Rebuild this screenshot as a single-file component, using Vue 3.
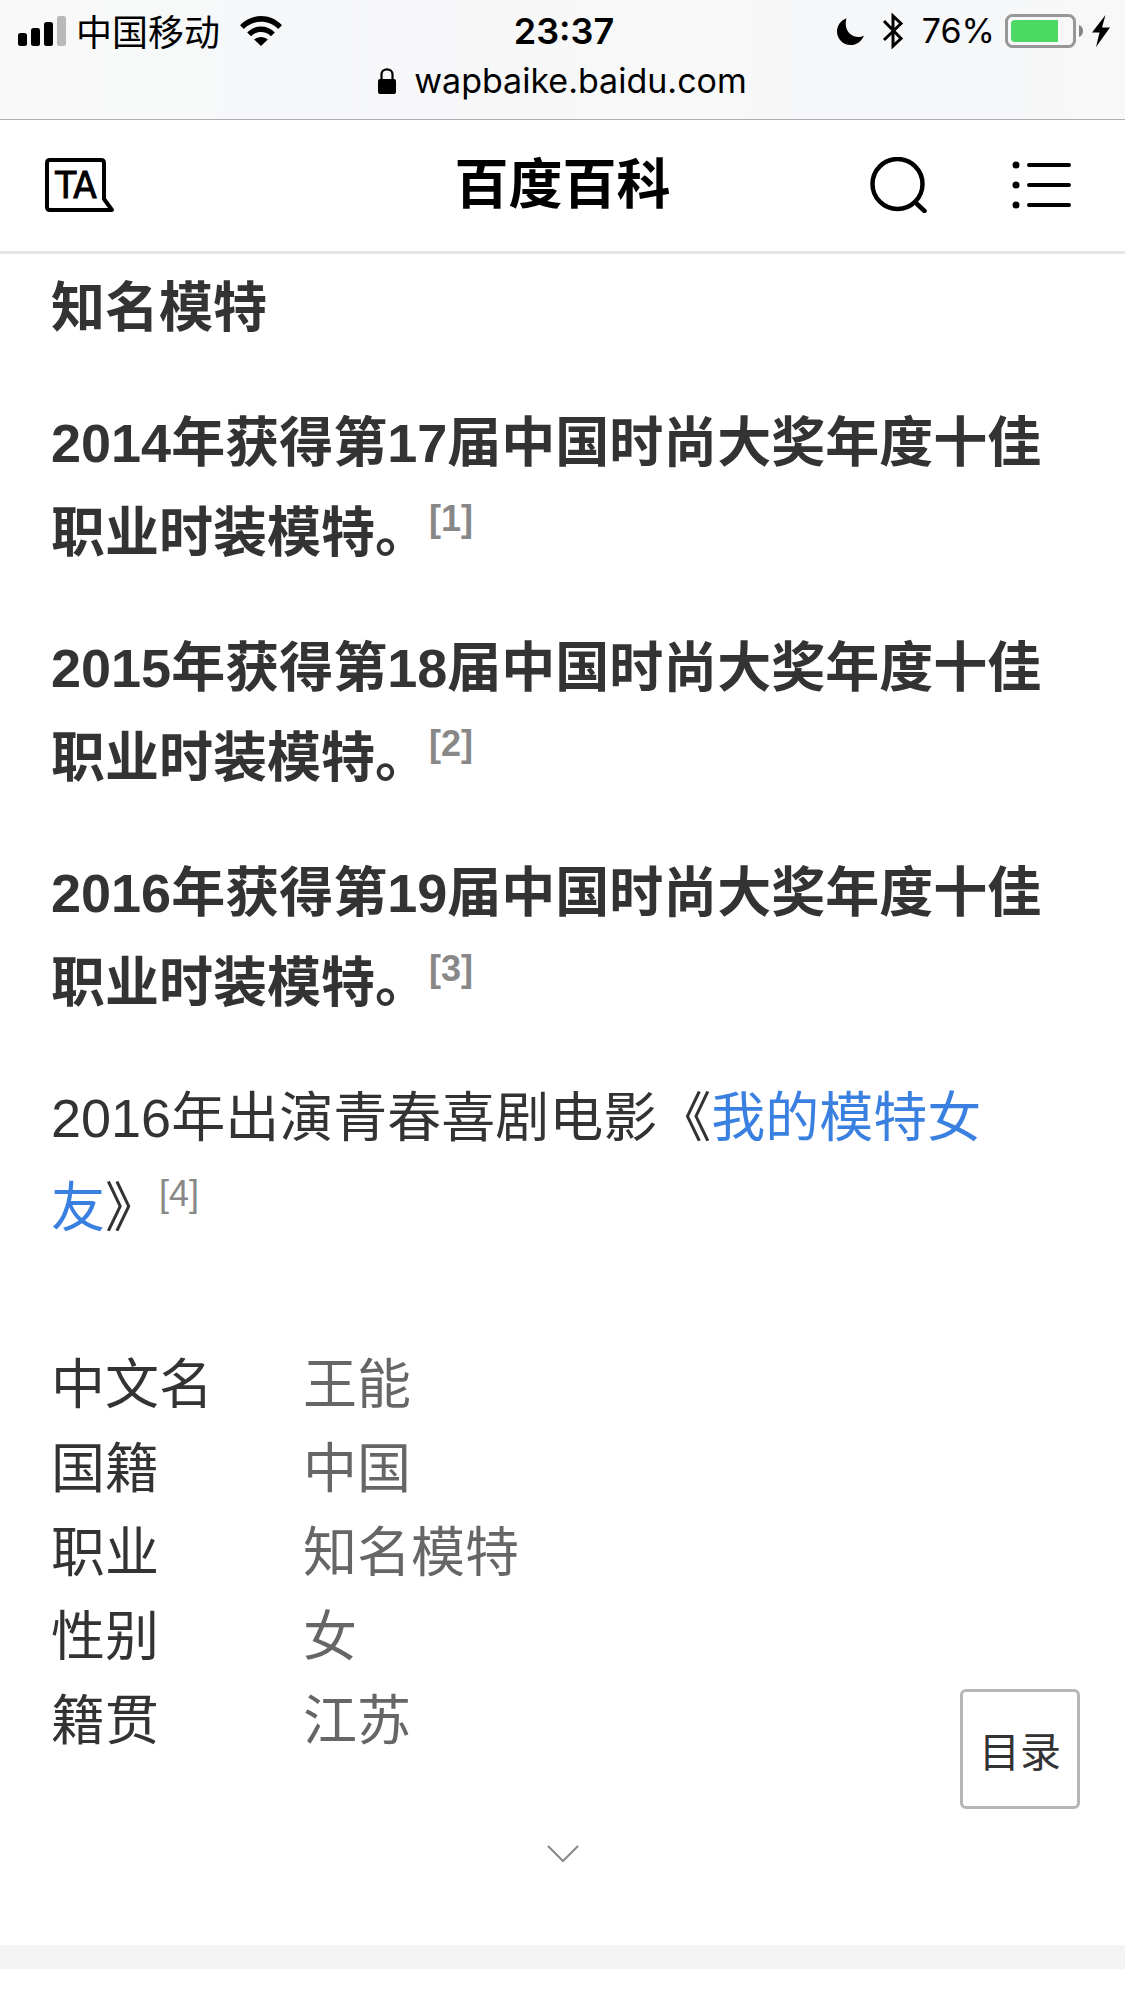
<script setup>
const awards = [
  { year: 2014, session: 17, ref: 1 },
  { year: 2015, session: 18, ref: 2 },
  { year: 2016, session: 19, ref: 3 },
]

const facts = [
  { label: '中文名', value: '王能' },
  { label: '国籍', value: '中国' },
  { label: '职业', value: '知名模特' },
  { label: '性别', value: '女' },
  { label: '籍贯', value: '江苏' },
]
</script>

<template>
  <div class="page">
    <div class="browser">
      <div class="status">
        <div class="carrier">
          <svg width="48" height="30" viewBox="0 0 48 30" aria-hidden="true">
            <rect x="0" y="17" width="9" height="13" rx="2.5" />
            <rect x="13" y="12" width="9" height="18" rx="2.5" />
            <rect x="26" y="6" width="9" height="24" rx="2.5" />
            <rect x="39" y="0" width="9" height="30" rx="2.5" fill="#b9b9ba" />
          </svg>
          <span class="operator">中国移动</span>
          <svg width="42" height="30" viewBox="0 0 42 30" aria-hidden="true">
            <path d="M0 9.2C11.5-3 30.500-3 42 9.200L38.200 13C28.500 3.400 13.500 3.400 3.800 13Z" />
            <path d="M7.200 16.400C15 8.500 27 8.500 34.800 16.400L31 20.200C25.300 14.600 16.700 14.600 11 20.200Z" />
            <path d="M14.200 23.600C18 20 24 20 27.800 23.600L21 30Z" />
          </svg>
        </div>
        <time class="clock">23:37</time>
        <div class="indicators">
          <svg width="27" height="27" viewBox="0 0 27 27" aria-hidden="true">
            <path d="M9.500 0.300C4 2.300 0 7.500 0 13.500C0 21 6 27 13.500 27C19.500 27 25 23 27 17.400C18 22.500 5.500 14.500 9.500 0.300Z" />
          </svg>
          <svg class="bluetooth" width="22" height="38" viewBox="0 0 22 38" aria-hidden="true">
            <path d="M2 9L19 26.500L11 34V4L19 11.500L2 28" fill="none" stroke="#000" stroke-width="3" />
          </svg>
          <span class="percent">76%</span>
          <svg class="battery" width="79" height="34" viewBox="0 0 79 34" aria-hidden="true">
            <rect x="1.500" y="1.500" width="68" height="31" rx="6" fill="none" stroke="#979798" stroke-width="3" />
            <path d="M53 6V28H10Q6 28 6 24V10Q6 6 10 6Z" fill="#4cd964" />
            <path d="M74 11Q78 12.500 78 17T74 23Z" fill="#858586" />
          </svg>
          <svg width="18" height="32" viewBox="0 0 18 32" aria-hidden="true">
            <path d="M13.500 0L0 17.500H7.500L4 32L18 12.500H10Z" />
          </svg>
        </div>
      </div>
      <div class="address">
        <svg width="18" height="26" viewBox="0 0 18 26" aria-hidden="true">
          <path d="M3.500 13V6.500C3.500-0.300 14.500-0.300 14.500 6.500V13" fill="none" stroke="#000" stroke-width="2.200" />
          <rect y="11" width="18" height="15" rx="2" />
        </svg>
        <span>wapbaike.baidu.com</span>
      </div>
    </div>

    <header class="header">
      <button class="icon-button" type="button" aria-label="TA说">
        <svg width="70" height="54" viewBox="0 0 70 54" aria-hidden="true">
          <path d="M5 2H56Q59 2 59 5V41L67 52H5Q2 52 2 49V5Q2 2 5 2Z" fill="none" stroke="#000" stroke-width="4" stroke-linejoin="round" />
          <text class="ta" x="31" y="40" text-anchor="middle">TA</text>
        </svg>
      </button>
      <h1 class="title">百度百科</h1>
      <nav class="actions" aria-label="工具">
        <button class="icon-button" type="button" aria-label="搜索">
          <svg width="57" height="56" viewBox="0 0 57 56" aria-hidden="true">
            <circle cx="27.500" cy="27" r="25" fill="none" stroke="#000" stroke-width="4.500" />
            <path d="M46 46L54.500 54" stroke="#000" stroke-width="4.500" stroke-linecap="round" />
          </svg>
        </button>
        <button class="icon-button" type="button" aria-label="菜单">
          <svg width="68" height="48" viewBox="0 0 68 48" aria-hidden="true">
            <circle cx="4" cy="4" r="3.500" />
            <circle cx="4" cy="24" r="3.500" />
            <circle cx="4" cy="44" r="3.500" />
            <path d="M17 4H57M17 24H57M17 44H57" stroke="#000" stroke-width="4" stroke-linecap="round" />
          </svg>
        </button>
      </nav>
    </header>

    <main class="content">
      <p class="strong">知名模特</p>
      <p v-for="award in awards" :key="award.ref" class="strong">{{ award.year }}年获得第{{ award.session }}届中国时尚大奖年度十佳职业时装模特。<sup>[{{ award.ref }}]</sup></p>
      <p>2016年出演青春喜剧电影《<a href="#film">我的模特女友</a>》<sup>[4]</sup></p>

      <dl class="facts">
        <template v-for="fact in facts" :key="fact.label">
          <dt>{{ fact.label }}</dt>
          <dd>{{ fact.value }}</dd>
        </template>
      </dl>

      <button class="expand" type="button" aria-label="展开">
        <svg width="32" height="18" viewBox="0 0 32 18" aria-hidden="true">
          <path d="M1 1L16 16L31 1" fill="none" stroke="#888" stroke-width="2" />
        </svg>
      </button>
    </main>
    <div class="divider"></div>

    <button class="toc" type="button">目录</button>
  </div>
</template>

<style>
body {
  margin: 0;
  background: #fff;
}
</style>

<style scoped>
.page {
  color: #333;
  font-family: "Liberation Sans", "Noto Sans CJK SC", sans-serif;
  font-size: 54px;
}

svg {
  display: block;
  flex: none;
}

button {
  padding: 0;
  border: 0;
  background: none;
  font: inherit;
  color: inherit;
}

.browser {
  height: 119px;
  border-bottom: 1px solid #b2b2b4;
  background: linear-gradient(90deg, #f8f9f8, #f6f7f9 30%, #f8f8f8 60%, #f5f7f9 82%, #f8f8f8);
  color: #000;
  font-family: Inter, "Noto Sans CJK SC", sans-serif;
  font-size: 34px;
}

.status {
  display: grid;
  grid-template-columns: 1fr auto 1fr;
  align-items: center;
  height: 62px;
  padding: 0 15px 0 18px;
  line-height: 60px;
}

.carrier,
.indicators {
  display: flex;
  align-items: center;
}

.operator {
  margin: 0 20px 0 10px;
  padding-bottom: 2px;
  font-family: "Noto Sans CJK SC", sans-serif;
  font-size: 36px;
  line-height: 58px;
}

.clock {
  font-size: 36px;
  font-weight: 600;
}

.indicators {
  justify-content: flex-end;
}

.bluetooth {
  margin: 0 18px;
}

.battery {
  margin: 0 8px 0 10px;
}

.address {
  display: flex;
  align-items: center;
  justify-content: center;
  gap: 18px;
  line-height: 38px;
}

.header {
  display: grid;
  grid-template-columns: 1fr auto 1fr;
  align-items: center;
  height: 129px;
  padding: 0 45px 2px;
  border-bottom: 3px solid #e6e6e6;
  color: #000;
}

.icon-button {
  justify-self: start;
}

.ta {
  font-family: "Liberation Sans Narrow", "DejaVu Sans Condensed", sans-serif;
  font-size: 38px;
  stroke: #000;
  stroke-width: 1px;
}

.title {
  margin: 0;
  font-size: 54px;
  line-height: 90px;
}

.actions {
  display: flex;
  align-items: center;
  justify-content: flex-end;
  gap: 85px;
}

.content {
  padding: 9px 51px 0;
}

p {
  margin: 0 0 45px;
  line-height: 90px;
}

.strong {
  font-weight: 700;
}

a {
  color: #3a80e0;
  text-decoration: none;
}

sup {
  color: #888;
  font-size: 36px;
  line-height: 0;
  vertical-align: 21px;
}

.facts {
  display: grid;
  grid-template-columns: 252px 1fr;
  margin: 90px 0 0;
  line-height: 84px;
}

dd {
  margin: 0;
  color: #666;
}

.expand {
  display: block;
  margin: 0 auto;
  padding: 82px 40px;
}

.divider {
  height: 24px;
  background: #f4f4f4;
}

.toc {
  position: fixed;
  right: 45px;
  bottom: 192px;
  width: 120px;
  height: 120px;
  border: 3px solid #b6b6b6;
  border-radius: 6px;
  background: #fff;
  font-size: 41px;
}
</style>
